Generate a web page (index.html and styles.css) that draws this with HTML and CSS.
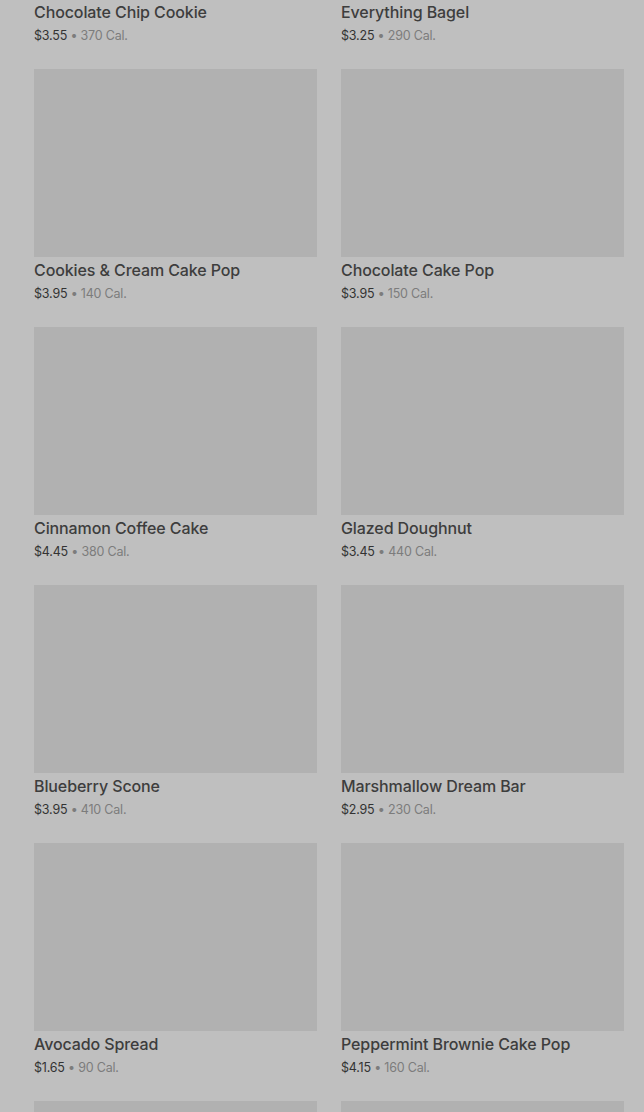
FILE: index.html
```html
<!DOCTYPE html>
<html lang="en">
<head>
<meta charset="UTF-8">
<meta name="viewport" content="width=device-width, initial-scale=1.0">
<title>Bakery</title>
<link rel="stylesheet" href="styles.css">
</head>
<body>
    <div class="menu-grid">
        <div class="item">
            <div class="item-image"></div>
            <div class="item-name">Chocolate Chip Cookie</div>
            <div class="item-info">$3.55 <span class="cal">• 370 Cal.</span></div>
        </div>
        <div class="item">
            <div class="item-image"></div>
            <div class="item-name">Everything Bagel</div>
            <div class="item-info">$3.25 <span class="cal">• 290 Cal.</span></div>
        </div>
        <div class="item">
            <div class="item-image"></div>
            <div class="item-name">Cookies &amp; Cream Cake Pop</div>
            <div class="item-info">$3.95 <span class="cal">• 140 Cal.</span></div>
        </div>
        <div class="item">
            <div class="item-image"></div>
            <div class="item-name">Chocolate Cake Pop</div>
            <div class="item-info">$3.95 <span class="cal">• 150 Cal.</span></div>
        </div>
        <div class="item">
            <div class="item-image"></div>
            <div class="item-name">Cinnamon Coffee Cake</div>
            <div class="item-info">$4.45 <span class="cal">• 380 Cal.</span></div>
        </div>
        <div class="item">
            <div class="item-image"></div>
            <div class="item-name">Glazed Doughnut</div>
            <div class="item-info">$3.45 <span class="cal">• 440 Cal.</span></div>
        </div>
        <div class="item">
            <div class="item-image"></div>
            <div class="item-name">Blueberry Scone</div>
            <div class="item-info">$3.95 <span class="cal">• 410 Cal.</span></div>
        </div>
        <div class="item">
            <div class="item-image"></div>
            <div class="item-name">Marshmallow Dream Bar</div>
            <div class="item-info">$2.95 <span class="cal">• 230 Cal.</span></div>
        </div>
        <div class="item">
            <div class="item-image"></div>
            <div class="item-name">Avocado Spread</div>
            <div class="item-info">$1.65 <span class="cal">• 90 Cal.</span></div>
        </div>
        <div class="item">
            <div class="item-image"></div>
            <div class="item-name">Peppermint Brownie Cake Pop</div>
            <div class="item-info">$4.15 <span class="cal">• 160 Cal.</span></div>
        </div>
        <!-- next row, only the top of the photos is in view -->
        <div class="item">
            <div class="item-image"></div>
        </div>
        <div class="item">
            <div class="item-image"></div>
        </div>
    </div>
</body>
</html>
```

FILE: styles.css
```css
body {
    font-family: 'Inter', 'Roboto', sans-serif;
    margin: 0;
    padding: 0;
    background-color: #bfbfbf;
    height: 1112px;
    overflow: hidden;
}

/* page is scrolled, first row photos are above the fold */
.menu-grid {
    display: grid;
    grid-template-columns: 283px 283px;
    column-gap: 24px;
    row-gap: 26px;
    padding: 0 20px 0 34px;
    margin-top: -189px;
}

.item {
    height: 232px;
}

.item-image {
    height: 188px;
    background-color: #b1b1b1;
}

.item-name {
    margin-top: 1px;
    font-size: 16px;
    font-weight: 500;
    line-height: 24px;
    color: #3d3d3d;
    letter-spacing: -0.1px;
}

.item-info {
    margin-top: 3px;
    font-size: 12.5px;
    line-height: 18px;
    color: #333333;
    letter-spacing: -0.2px;
}

.cal {
    color: #7c7c7c;
}
```
